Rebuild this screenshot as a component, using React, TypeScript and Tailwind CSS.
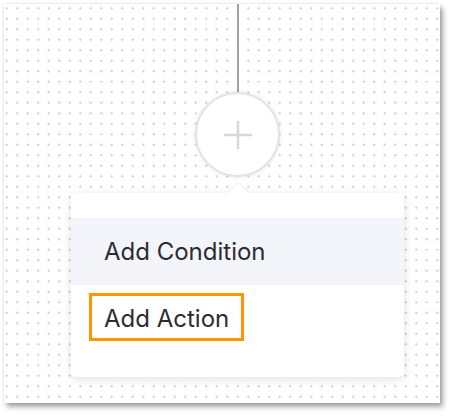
export default function App() {
  return (
    <div className="h-[417px] w-[453px] bg-white pl-[4px] pt-[4px]" style={{ fontFamily: "Inter, 'Noto Sans', sans-serif" }}>
      <div className="h-[399px] w-[436px] bg-white bg-[radial-gradient(circle,#cdcdd0_0.9px,transparent_1.3px)] bg-[size:10.5px_10.5px] bg-[position:-2.5px_-1px] shadow-[0_0_3px_rgba(0,0,0,0.12),3px_4px_5px_rgba(0,0,0,0.35)]">
        <div className="flex w-[400px] flex-col items-center pl-[67px]">
          <div className="h-[88px] w-[2px] bg-[#a2a2aa]" />
          <div className="flex h-[85px] w-[85px] items-center justify-center rounded-full border-2 border-[#e2e2e9] bg-white shadow-[0_0_4px_rgba(0,0,0,0.1)]">
            <svg width="30" height="30" viewBox="0 0 30 30">
              <path d="M15 1v28M1 15h28" stroke="#d7d7de" strokeWidth="2.5" />
            </svg>
          </div>
          <div className="mt-[6px] h-0 w-0 border-x-[10px] border-b-[10px] border-x-transparent border-b-white drop-shadow-[0_-1px_1px_rgba(0,0,0,0.08)]" />
          <div className="w-[333px] rounded-[5px] bg-white py-[25px] shadow-[0_2px_10px_rgba(0,0,0,0.12)]">
            <div className="flex h-[67px] items-center bg-[#f4f5fa] pl-[33px] text-[24px] text-[#2b2b33]">
              Add Condition
            </div>
            <div className="relative flex h-[67px] items-center pl-[33px] text-[24px] text-[#2b2b33]">
              Add Action
              <div className="absolute left-[18px] top-[8px] h-[48px] w-[155px] border-[3px] border-[#ff9500]" />
            </div>
          </div>
        </div>
      </div>
    </div>
  );
}
